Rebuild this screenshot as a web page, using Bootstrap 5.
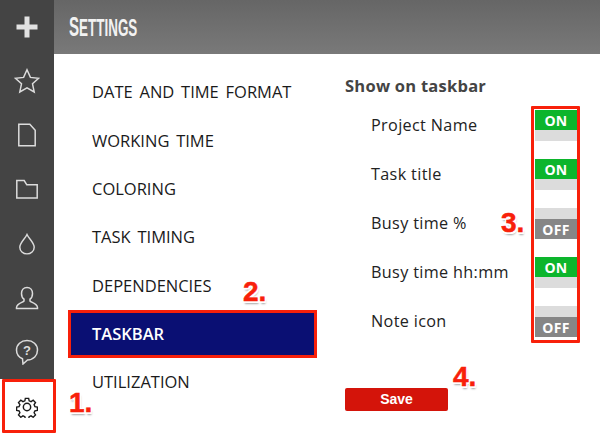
<!DOCTYPE html>
<html lang="en"><head><meta charset="utf-8"><title>Settings</title>
<link href="https://cdn.jsdelivr.net/npm/bootstrap@5.3.0/dist/css/bootstrap.min.css" rel="stylesheet">
<style>
html,body{width:600px;height:434px;overflow:hidden;background:#fff}
.stage{position:relative;width:600px;height:434px;font-family:"Open Sans","DejaVu Sans",sans-serif}
.rail{width:54px;background:#444;height:379px}
.rail-item{height:54.3px}
.rail-item svg{display:block}
.rail-end{height:55px}
.leftcol{width:54px}
.head{height:54px;background:linear-gradient(#666,#797979);padding-left:15px}
.head-title{display:inline-block;font-family:"Liberation Sans",sans-serif;font-weight:700;text-transform:uppercase;font-size:24px;color:#f2f2f2;line-height:54px;transform:scaleX(.56);transform-origin:left center}
.head-title::first-letter{font-size:27px}
.menu{width:249px;margin:14px 0 0 14px}
.menu a{height:48.33px;padding:1px 0 0 24px;font-size:16.500px;word-spacing:2.500px;color:#1a1a1a;display:flex;align-items:center;border-radius:0}
.menu a.on{background:#0a0f73;color:#fff;font-weight:600;border:3px solid #f8200a;padding-left:21px}
.panel{width:235px;margin-left:28px;padding-top:21px}
.panel-title{font-size:16.500px;font-weight:700;color:#444;line-height:22px;margin-bottom:4px;letter-spacing:.25px}
.opt{height:49px;padding-left:26px;padding-right:3px;font-size:16.200px;color:#222;letter-spacing:.35px}
.opt span.lbl{margin-top:-1px}
.tog{width:42px;height:31px;font-size:14px;font-weight:700;color:#fff;line-height:21px;text-align:center;background:#dcdcdc;display:flex;flex-direction:column}
.tog b{display:block;height:20px;font-weight:700}
.tog.yes{justify-content:flex-start}
.tog.yes b{background:#0cb52c}
.tog.no{justify-content:flex-end}
.tog.no b{background:#868686}
.savebtn{width:103px;height:23px;background:#d4140a;border:0;border-radius:2px;color:#fff;font:700 14px/23px "Liberation Sans",sans-serif;padding:0;margin-top:42px;display:block}
.boxmark{position:absolute;border:3px solid #f8200a;border-radius:1px;pointer-events:none}
.bm1{left:2px;top:379px;width:54px;height:54px}
.bm3{left:531px;top:106px;width:49px;height:237px}
.num{position:absolute;font:700 28px/1 "Liberation Sans",sans-serif;color:#f8200a;-webkit-text-stroke:.5px #f8200a;text-shadow:1.500px 1.500px 0 #fff,-1.500px -1.500px 0 #fff,1.500px -1.500px 0 #fff,-1.500px 1.500px 0 #fff,1px 3px 2px rgba(0,0,0,.35)}
.n1{left:69px;top:389px}.n2{left:243px;top:278px}.n3{left:501px;top:209px}.n4{left:453px;top:363px}
</style></head><body>
<div class="stage d-flex">
 <div class="leftcol flex-shrink-0">
 <div class="rail d-flex flex-column">
  <div class="rail-item d-flex align-items-center justify-content-center"><svg width="24" height="24" viewBox="0 0 24 24"><path d="M9.500 1.500h5v8h8v5h-8v8h-5v-8h-8v-5h8z" fill="#e2e2e2"/></svg></div>
  <div class="rail-item d-flex align-items-center justify-content-center"><svg width="26" height="26" viewBox="0 0 26 26"><path d="M13 1.800l3.400 7.600 8.200.9-6.100 5.500 1.700 8.100L13 19.800l-7.200 4.100 1.700-8.100-6.100-5.500 8.200-.9z" fill="none" stroke="#dcdcdc" stroke-width="1.500"/></svg></div>
  <div class="rail-item d-flex align-items-center justify-content-center"><svg width="20" height="24" viewBox="0 0 20 24"><path d="M1.800 1.200h11l5.400 6v15.600H1.800z" fill="none" stroke="#dcdcdc" stroke-width="1.500"/></svg></div>
  <div class="rail-item d-flex align-items-center justify-content-center"><svg width="24" height="22" viewBox="0 0 24 22"><path d="M1.800 20V2.500h7.400l2.600 4.300h10.400V20z" fill="none" stroke="#dcdcdc" stroke-width="1.500"/></svg></div>
  <div class="rail-item d-flex align-items-center justify-content-center"><svg width="18" height="22" viewBox="0 0 20 24"><path d="M10 1.500C8 6 2 10.500 2 15.500a8 7.500 0 0 0 16 0C18 10.500 12 6 10 1.500z" fill="none" stroke="#dcdcdc" stroke-width="1.600"/></svg></div>
  <div class="rail-item d-flex align-items-center justify-content-center"><svg width="24" height="24" viewBox="0 0 24 24"><path d="M12 1.500c-3.500 0-5.500 2.800-5.500 6 0 2.400 1 4.600 2.500 5.700v1.800c-1 1.500-7 2-7.500 6.500v1h21v-1c-.5-4.500-6.500-5-7.500-6.500v-1.800c1.500-1.100 2.500-3.300 2.500-5.700 0-3.200-2-6-5.500-6z" fill="none" stroke="#dcdcdc" stroke-width="1.500"/></svg></div>
  <div class="rail-item d-flex align-items-center justify-content-center"><svg width="24" height="26" viewBox="0 0 24 26"><path d="M12 1.500C6 1.500 1.500 5.500 1.500 11c0 4 2.500 7.200 6 8.800L8 25l4.500-4c6-.1 10-4.500 10-10 0-5.500-4.500-9.500-10.500-9.500z" fill="none" stroke="#dcdcdc" stroke-width="1.500"/><text x="12" y="16" text-anchor="middle" font-family="Liberation Sans" font-weight="700" font-size="13" fill="#dcdcdc">?</text></svg></div>
 </div>
 <div class="rail-end d-flex align-items-center justify-content-center"><svg width="22" height="22" viewBox="0 0 24 24"><path d="M10 1.500h4l.6 3 2.300 1 2.600-1.700 2.800 2.800-1.700 2.600 1 2.300 3 .6v4l-3 .6-1 2.300 1.700 2.600-2.800 2.800-2.600-1.700-2.300 1-.6 3h-4l-.6-3-2.300-1-2.600 1.700-2.800-2.800 1.700-2.600-1-2.300-3-.6v-4l3-.6 1-2.300-1.700-2.600 2.800-2.800 2.600 1.700 2.300-1z" transform="translate(1.200 1.200) scale(.9)" fill="none" stroke="#1a1a1a" stroke-width="1.700"/><circle cx="12" cy="12" r="4" fill="none" stroke="#1a1a1a" stroke-width="1.600"/></svg></div>
 </div>
 <div class="flex-grow-1">
  <div class="head"><div class="head-title">Settings</div></div>
  <div class="d-flex">
   <nav class="nav flex-column menu flex-shrink-0">
    <a class="nav-link" href="#">DATE AND TIME FORMAT</a>
    <a class="nav-link" href="#">WORKING TIME</a>
    <a class="nav-link" href="#">COLORING</a>
    <a class="nav-link" href="#">TASK TIMING</a>
    <a class="nav-link" href="#">DEPENDENCIES</a>
    <a class="nav-link on" href="#">TASKBAR</a>
    <a class="nav-link" href="#">UTILIZATION</a>
   </nav>
   <div class="panel flex-shrink-0">
    <div class="panel-title">Show on taskbar</div>
    <div class="opt d-flex align-items-center justify-content-between"><span class="lbl">Project Name</span><div class="tog yes"><b>ON</b></div></div>
    <div class="opt d-flex align-items-center justify-content-between"><span class="lbl">Task title</span><div class="tog yes"><b>ON</b></div></div>
    <div class="opt d-flex align-items-center justify-content-between"><span class="lbl">Busy time %</span><div class="tog no"><b>OFF</b></div></div>
    <div class="opt d-flex align-items-center justify-content-between"><span class="lbl">Busy time hh:mm</span><div class="tog yes"><b>ON</b></div></div>
    <div class="opt d-flex align-items-center justify-content-between"><span class="lbl">Note icon</span><div class="tog no"><b>OFF</b></div></div>
    <button class="btn savebtn" type="button">Save</button>
   </div>
  </div>
 </div>
 <div class="boxmark bm1"></div><div class="boxmark bm3"></div>
 <div class="num n1">1.</div><div class="num n2">2.</div><div class="num n3">3.</div><div class="num n4">4.</div>
</div>
<script src="https://cdn.jsdelivr.net/npm/bootstrap@5.3.0/dist/js/bootstrap.bundle.min.js"></script>
</body></html>
